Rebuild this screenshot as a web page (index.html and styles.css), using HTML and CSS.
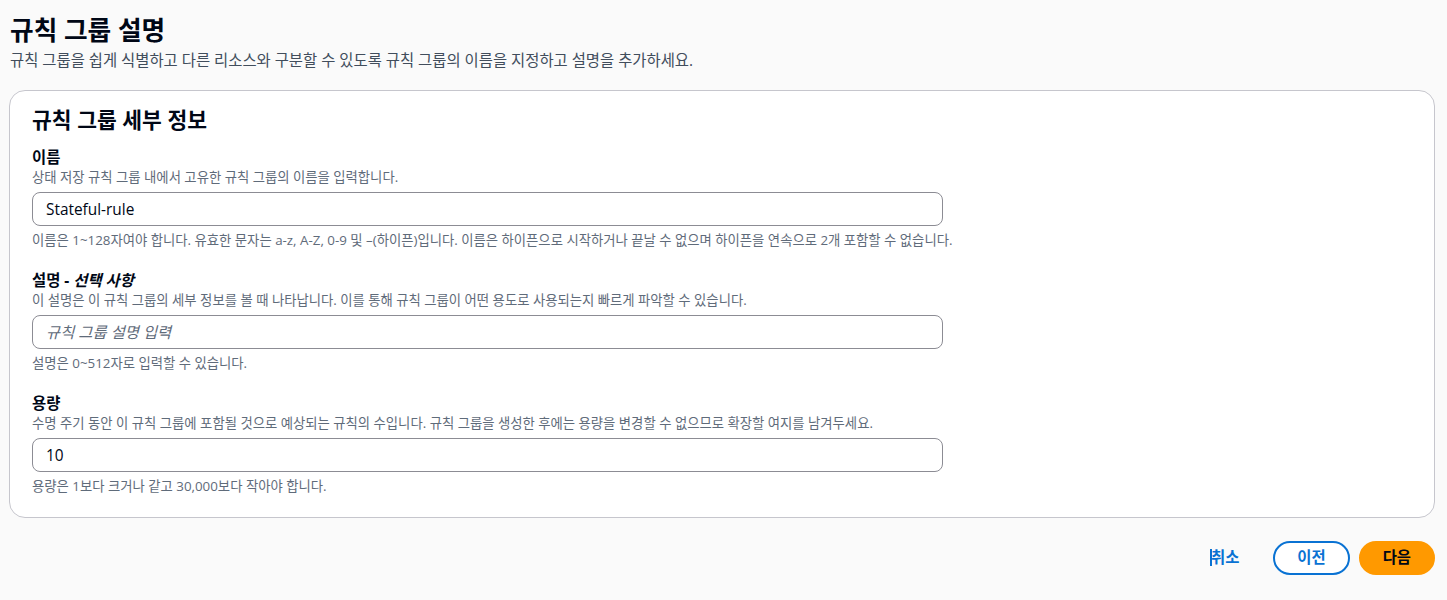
FILE: index.html
```html
<!DOCTYPE html>
<html lang="ko">
<head>
<meta charset="utf-8">
<title>규칙 그룹 설명</title>
<link rel="stylesheet" href="styles.css">
</head>
<body>
<div class="page">
  <header class="page-header">
    <h1 class="page-title">규칙 그룹 설명</h1>
    <p class="page-desc">규칙 그룹을 쉽게 식별하고 다른 리소스와 구분할 수 있도록 규칙 그룹의 이름을 지정하고 설명을 추가하세요.</p>
  </header>

  <section class="panel">
    <h2 class="panel-title">규칙 그룹 세부 정보</h2>

    <div class="field">
      <label class="field-label" for="name">이름</label>
      <div class="field-desc">상태 저장 규칙 그룹 내에서 고유한 규칙 그룹의 이름을 입력합니다.</div>
      <input class="field-input" id="name" type="text" value="Stateful-rule">
      <div class="field-hint">이름은 1~128자여야 합니다. 유효한 문자는 a-z, A-Z, 0-9 및 –(하이픈)입니다. 이름은 하이픈으로 시작하거나 끝날 수 없으며 하이픈을 연속으로 2개 포함할 수 없습니다.</div>
    </div>

    <div class="field">
      <label class="field-label" for="desc">설명 - <i>선택 사항</i></label>
      <div class="field-desc">이 설명은 이 규칙 그룹의 세부 정보를 볼 때 나타납니다. 이를 통해 규칙 그룹이 어떤 용도로 사용되는지 빠르게 파악할 수 있습니다.</div>
      <input class="field-input" id="desc" type="text" placeholder="규칙 그룹 설명 입력">
      <div class="field-hint">설명은 0~512자로 입력할 수 있습니다.</div>
    </div>

    <div class="field">
      <label class="field-label" for="cap">용량</label>
      <div class="field-desc">수명 주기 동안 이 규칙 그룹에 포함될 것으로 예상되는 규칙의 수입니다. 규칙 그룹을 생성한 후에는 용량을 변경할 수 없으므로 확장할 여지를 남겨두세요.</div>
      <input class="field-input" id="cap" type="text" value="10">
      <div class="field-hint">용량은 1보다 크거나 같고 30,000보다 작아야 합니다.</div>
    </div>
  </section>

  <div class="actions">
    <button class="btn btn-link" type="button"><span class="caret"></span>취소</button>
    <button class="btn btn-normal" type="button">이전</button>
    <button class="btn btn-primary" type="button">다음</button>
  </div>
</div>
</body>
</html>
```

FILE: styles.css
```css
* {
  box-sizing: border-box;
}

html, body {
  margin: 0;
  padding: 0;
  background: #fafafa;
}

body {
  font-family: "Open Sans", "Noto Sans CJK KR", sans-serif;
  color: #000716;
}

.page {
  padding: 16px 12px 0 9px;
}

.page-header {
  padding-left: 1px;
}

.page-title {
  margin: 0;
  font-size: 25.7px;
  line-height: 30px;
  font-weight: 700;
  color: #000716;
}

.page-desc {
  margin: 5px 0 0 0;
  font-size: 15.4px;
  line-height: 20px;
  color: #414d5c;
}

.panel {
  margin-top: 19px;
  background: #ffffff;
  border: 1px solid #c6c6cd;
  border-radius: 16px;
  padding: 17px 22px 23px 22px;
}

.panel-title {
  margin: 0 0 15px 0;
  font-size: 21.5px;
  line-height: 24px;
  font-weight: 700;
  color: #000716;
}

.field + .field {
  margin-top: 22px;
}

.field-label {
  display: block;
  font-size: 15.4px;
  line-height: 22px;
  font-weight: 700;
  color: #000716;
}

.field-label i {
  font-style: italic;
}

.field-desc,
.field-hint {
  font-size: 13.35px;
  line-height: 16px;
  color: #5f6b7a;
}

.field-input {
  display: block;
  width: 911px;
  height: 34px;
  margin-top: 7px;
  padding: 0 12px 0 13px;
  border: 1px solid #8c8c94;
  border-radius: 8px;
  background: #ffffff;
  font-family: "Open Sans", "Noto Sans CJK KR", sans-serif;
  font-size: 15.4px;
  color: #000716;
  outline: none;
}

.field-input::placeholder {
  color: #5f6b7a;
  font-style: italic;
  opacity: 1;
}

.field-hint {
  margin-top: 6px;
}

.actions {
  display: flex;
  justify-content: flex-end;
  align-items: center;
  gap: 9px;
  margin-top: 23px;
}

.btn {
  position: relative;
  height: 34px;
  font-family: "Open Sans", "Noto Sans CJK KR", sans-serif;
  font-size: 15.4px;
  line-height: 22px;
  font-weight: 700;
  padding: 0 22px;
  border: 2px solid transparent;
  border-radius: 20px;
  background: transparent;
  cursor: pointer;
}

.btn-link {
  color: #0972d3;
  margin-right: 1px;
}

.caret {
  position: absolute;
  left: 21px;
  top: 6px;
  width: 2px;
  height: 17px;
  background: #0972d3;
}

.btn-normal {
  color: #0972d3;
  border-color: #0972d3;
  background: #ffffff;
}

.btn-primary {
  color: #000716;
  background: #ff9900;
  border-color: #ff9900;
}
```
